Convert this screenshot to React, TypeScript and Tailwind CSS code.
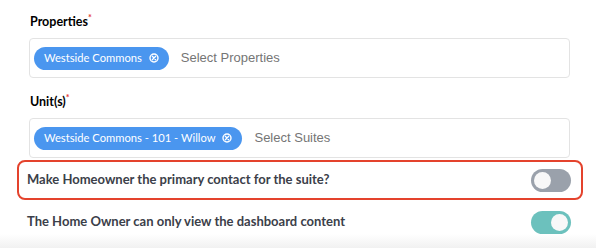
import React, { useState } from "react";

function ChipX() {
  return (
    <svg width="10" height="10" viewBox="0 0 10 10" className="ml-[7px] shrink-0">
      <circle cx="5" cy="5" r="4" fill="none" stroke="white" strokeWidth="1.4" />
      <path d="M3.3 3.3 L6.7 6.7 M6.7 3.3 L3.3 6.7" stroke="white" strokeWidth="1.3" strokeLinecap="round" />
    </svg>
  );
}

function MultiSelect({ chip, placeholder }: { chip: string; placeholder: string }) {
  return (
    <div className="ml-[29px] mr-[26px] flex h-[40px] items-center rounded-[4px] border border-[#e3e3e3] bg-white pl-[4px]">
      <span className="flex h-[23px] items-center rounded-full bg-[#4a96ef] pl-[10px] pr-[10px] text-[11.2px] text-white">
        {chip}
        <ChipX />
      </span>
      <span className="ml-[12px] text-[13px] text-[#757575]" style={{ fontFamily: "'Liberation Sans', Arial, sans-serif" }}>
        {placeholder}
      </span>
    </div>
  );
}

function Toggle({ on, onClick }: { on: boolean; onClick: () => void }) {
  return (
    <button
      onClick={onClick}
      className={
        "flex h-[23px] w-[40px] items-center rounded-full px-[3px] " +
        (on ? "justify-end bg-[#6cc1bd]" : "justify-start bg-[#9aa1ab]")
      }
    >
      <span className="h-[17px] w-[17px] rounded-full bg-[#f8f8f8]" />
    </button>
  );
}

export default function App() {
  const [primary, setPrimary] = useState(false);
  const [dashOnly, setDashOnly] = useState(true);

  return (
    <div
      className="relative h-[248px] w-[596px] overflow-hidden bg-white"
      style={{ fontFamily: "Lato, sans-serif" }}
    >
      <div className="pt-[14px]">
        <div className="ml-[30px] flex h-[16px] items-center text-[12.5px] font-bold text-black">
          Properties<span className="-mt-[8px] text-[9px] text-[#e53935]">*</span>
        </div>
        <div className="mt-[8px]">
          <MultiSelect chip="Westside Commons" placeholder="Select Properties" />
        </div>

        <div className="ml-[30px] mt-[16px] flex h-[16px] items-center text-[12.5px] font-bold text-black">
          Unit(s)<span className="-mt-[8px] text-[9px] text-[#e53935]">*</span>
        </div>
        <div className="mt-[8px]">
          <MultiSelect chip="Westside Commons - 101 - Willow" placeholder="Select Suites" />
        </div>

        <div className="ml-[17px] mr-[13px] mt-[2px] flex h-[40px] items-center justify-between rounded-[8px] border-2 border-[#e4432d] pl-[8px] pr-[10px]">
          <span className="text-[13px] font-bold text-[#3b4049]">Make Homeowner the primary contact for the suite?</span>
          <Toggle on={primary} onClick={() => setPrimary(!primary)} />
        </div>

        <div className="ml-[17px] mr-[13px] mt-[9px] flex h-[26px] items-center justify-between pl-[10px] pr-[12px]">
          <span className="text-[13px] font-bold text-[#3b4049]">The Home Owner can only view the dashboard content</span>
          <Toggle on={dashOnly} onClick={() => setDashOnly(!dashOnly)} />
        </div>
      </div>
      <div className="pointer-events-none absolute bottom-0 left-0 h-[14px] w-full bg-gradient-to-b from-transparent to-[#f1f1f1]" />
    </div>
  );
}
